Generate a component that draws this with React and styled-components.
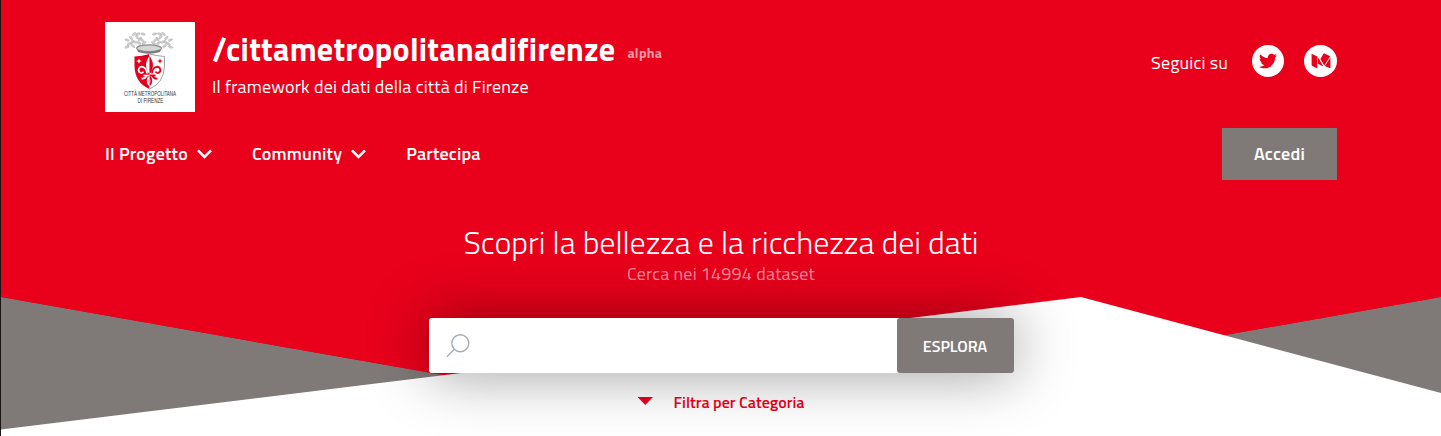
import React from 'react';
import styled, { createGlobalStyle } from 'styled-components';
import { FaTwitter } from 'react-icons/fa';

const RED = '#e9001b';
const GRAY = '#7f7a78';

const GlobalStyle = createGlobalStyle`
  *, *::before, *::after { box-sizing: border-box; }
  body {
    margin: 0;
    background: #fff;
    color: #fff;
    font-family: 'Titillium Web', 'Open Sans', sans-serif;
    overflow: hidden;
  }
`;

const Page = styled.div`
  position: relative;
  height: 436px;
  border-left: 1px solid #1a1414;
  background: ${RED};
  overflow: hidden;
`;

const Backdrop = styled.svg`
  position: absolute;
  inset: 0;
  width: 1440px;
  height: 436px;
`;

const Content = styled.div`
  position: relative;
  width: 1232px;
  margin: 0 auto;
  padding-top: 22px;
`;

const Header = styled.header`
  display: flex;
  height: 90px;
`;

const Brand = styled.div`
  display: flex;
  flex-direction: column;
  flex: 1;
  padding: 3px 0 0 17px;
`;

const TitleRow = styled.div`
  display: flex;
  align-items: baseline;
  gap: 12px;
  height: 50px;
`;

const Title = styled.h1`
  margin: 0;
  font-size: 32px;
  font-weight: 700;
  line-height: 48px;
  letter-spacing: 0.29px;
`;

const Stage = styled.span`
  position: relative;
  top: -3px;
  font-size: 14px;
  font-weight: 700;
  line-height: 20px;
  letter-spacing: 0.25px;
  color: rgba(255, 255, 255, 0.6);
`;

const Text = styled.span`
  font-size: 18px;
  font-weight: 400;
  line-height: 24px;
  letter-spacing: 0.17px;
  color: ${(p) => (p.$faded ? 'rgba(255, 255, 255, 0.55)' : '#fff')};
`;

const Social = styled.div`
  display: flex;
  align-items: center;
  align-self: flex-start;
  height: 32px;
  margin-top: 23px;
  gap: 20px;

  ${Text} { margin: 4px 4px 0 0; }
`;

const SocialLink = styled.a`
  display: flex;
  align-items: center;
  justify-content: center;
  width: ${(p) => p.$width || 32}px;
  height: 32px;
  border-radius: 50%;
  background: #fff;
  color: ${RED};
`;

const NavBar = styled.nav`
  display: flex;
  align-items: center;
  height: 52px;
  margin-top: 16px;
`;

const NavItem = styled.a`
  display: flex;
  align-items: center;
  gap: 9px;
  margin-right: 40px;
  font-size: 18px;
  font-weight: 600;
  line-height: 24px;
  letter-spacing: 0.18px;
`;

const LoginButton = styled.button`
  width: 115px;
  height: 52px;
  margin-left: auto;
  padding: 0;
  border: 0;
  background: ${GRAY};
  color: #fff;
  font: 600 18px/24px 'Titillium Web', 'Open Sans', sans-serif;
  letter-spacing: 0.25px;
`;

const Hero = styled.section`
  display: flex;
  flex-direction: column;
  align-items: center;
  padding-top: 42px;
`;

const Heading = styled.h2`
  margin: 0;
  font-size: 32px;
  font-weight: 300;
  line-height: 40px;
`;

const SearchBar = styled.form`
  display: flex;
  justify-content: space-between;
  width: 585px;
  height: 55px;
  margin: 32px 0 17px;
  border-radius: 3px;
  background: #fff;
  box-shadow: 0 0 60px rgba(0, 0, 0, 0.41);
`;

const SearchIcon = styled.svg`
  width: 24px;
  height: 24px;
  margin: 16px 0 0 17px;
`;

const SearchButton = styled.button`
  width: 117px;
  height: 55px;
  padding: 0;
  border: 0;
  border-radius: 3px;
  background: ${GRAY};
  color: #fff;
  font: 600 16px/24px 'Titillium Web', 'Open Sans', sans-serif;
`;

const Filter = styled.a`
  display: flex;
  align-items: center;
  gap: 20px;
  color: #dc0019;
  font-size: 16px;
  font-weight: 600;
  line-height: 24px;
`;

const Chevron = () => (
  <svg width="15" height="10" viewBox="0 0 15 10" fill="none" stroke="#fff" strokeWidth="2.6">
    <path d="M1 1.3 7.5 7.8 14 1.3" />
  </svg>
);

// Leaves of the left branch as [x, y, angle]; the right branch mirrors them.
const LEAVES = [
  [22, 18, 20], [24, 22, -30], [26, 16, 50], [29, 12, -40], [30, 20, 15], [32, 15, 60],
  [35, 17, -50], [38, 12, 15], [37, 18, 40], [22, 25, -20], [33, 12, -20], [34, 21, 30],
  [27, 20, -60], [39, 21, -30], [28, 24, 40],
];

const Branch = ({ transform }) => (
  <g transform={transform} fill="#cfcfcf" stroke="#999" strokeWidth="0.3">
    {LEAVES.map(([x, y, a]) => (
      <ellipse key={`${x}-${y}`} cx={x} cy={y} rx="2.3" ry="1.1" transform={`rotate(${a} ${x} ${y})`} />
    ))}
  </g>
);

const Crest = () => (
  <svg width="90" height="90" viewBox="0 0 90 90">
    <rect width="90" height="90" fill="#fff" />
    <Branch />
    <Branch transform="matrix(-1 0 0 1 87.5 0)" />
    <ellipse cx="44" cy="26.2" rx="12.4" ry="3.3" fill="#d6d6d6" stroke="#8c8c8c" strokeWidth="1.1" />
    <path d="M32 27.5Q44 32 56 27.5L55 30Q44 33.5 33 30Z" fill="#777" />
    <path d="M29.5 34.5Q37 34 44.5 32V67Q30 61 29.5 44Z" fill="#e2001f" />
    <path d="M44.5 32Q52 34 59.5 34.5V44Q59 61 44.5 67" fill="#fff" stroke="#777" strokeWidth="0.7" />
    <path d="M44.5 34C41 39 39.8 43 42.6 50L44.5 52Z" fill="#fff" />
    <path d="M42 51.5C41.5 45 36 43 34 46.5C32.4 50 37 53 38.4 49.5M44.5 53.5H38.5M41.5 54Q40 57 36.5 56.5M43.8 55Q41.5 59 44 63" fill="none" stroke="#fff" strokeWidth="1.7" />
    <path d="M34 36.5l.8 1.8 2 .7-2 .8-.8 1.9-.8-1.9-2-.8 2-.7Z" fill="#fff" />
    <path d="M44.5 34C48 39 49.2 43 46.4 50L44.5 52Z" fill="#e2001f" />
    <path d="M47 51.5C47.5 45 53 43 55 46.5C56.6 50 52 53 50.6 49.5M44.5 53.5H50.5M47.5 54Q49 57 52.5 56.5M45.2 55Q47.5 59 45 63" fill="none" stroke="#e2001f" strokeWidth="1.8" />
    <path d="M55 36.5l.8 1.8 2 .7-2 .8-.8 1.9-.8-1.9-2-.8 2-.7Z" fill="#e2001f" />
    <g fill="#333" fontFamily="'Liberation Sans', sans-serif" fontSize="6.4" textAnchor="middle">
      <text x="45" y="74.2" textLength="52" lengthAdjust="spacingAndGlyphs">CITTÀ METROPOLITANA</text>
      <text x="45.5" y="80.7" textLength="26" lengthAdjust="spacingAndGlyphs">DI FIRENZE</text>
    </g>
  </svg>
);

const MediumLogo = () => (
  <svg width="20" height="16" viewBox="0 0 20 16" fill={RED}>
    <path d="M.6.7 6.3 3.5V15.4L1.3 13Q.6 12.7.6 12Z" />
    <path d="M6.9 4.2 12.4 13.5 6.9 10.8Z" />
    <path d="M9.4 5.9 12.5.8Q12.8.2 13.4.4L19.2 3.2 13.2 12.4Z" />
    <path d="M19.4 4.4V14.6Q19.4 15.4 18.6 15L13.8 12.9Z" />
  </svg>
);

export default function App() {
  return (
    <>
      <GlobalStyle />
      <Page>
        <Backdrop viewBox="0 0 1440 436">
          <path d="M0 297 720 424 1440 297V436H0Z" fill={GRAY} />
          <path d="M0 297 720 424 1440 297V200H0Z" fill={RED} />
          <path d="M0 429.5 1080 297 1440 393V436H0Z" fill="#fff" />
        </Backdrop>
        <Content>
          <Header>
            <Crest />
            <Brand>
              <TitleRow>
                <Title>/cittametropolitanadifirenze</Title>
                <Stage>alpha</Stage>
              </TitleRow>
              <Text>Il framework dei dati della città di Firenze</Text>
            </Brand>
            <Social>
              <Text>Seguici su</Text>
              <SocialLink><FaTwitter size={18} /></SocialLink>
              <SocialLink $width={33}><MediumLogo /></SocialLink>
            </Social>
          </Header>
          <NavBar>
            <NavItem>Il Progetto <Chevron /></NavItem>
            <NavItem>Community <Chevron /></NavItem>
            <NavItem>Partecipa</NavItem>
            <LoginButton>Accedi</LoginButton>
          </NavBar>
          <Hero>
            <Heading>Scopri la bellezza e la ricchezza dei dati</Heading>
            <Text $faded>Cerca nei 14994 dataset</Text>
            <SearchBar>
              <SearchIcon viewBox="0 0 24 24" fill="none" stroke="#a3adb8" strokeWidth="1.4">
                <circle cx="14.3" cy="9.3" r="8.5" />
                <path d="M8.3 15.3.8 22.8" />
              </SearchIcon>
              <SearchButton type="button">ESPLORA</SearchButton>
            </SearchBar>
            <Filter>
              <svg width="16" height="12" viewBox="0 0 16 12">
                <path d="M-.5 1H15L7.3 9Z" fill="#dc0019" />
              </svg>
              Filtra per Categoria
            </Filter>
          </Hero>
        </Content>
      </Page>
    </>
  );
}
